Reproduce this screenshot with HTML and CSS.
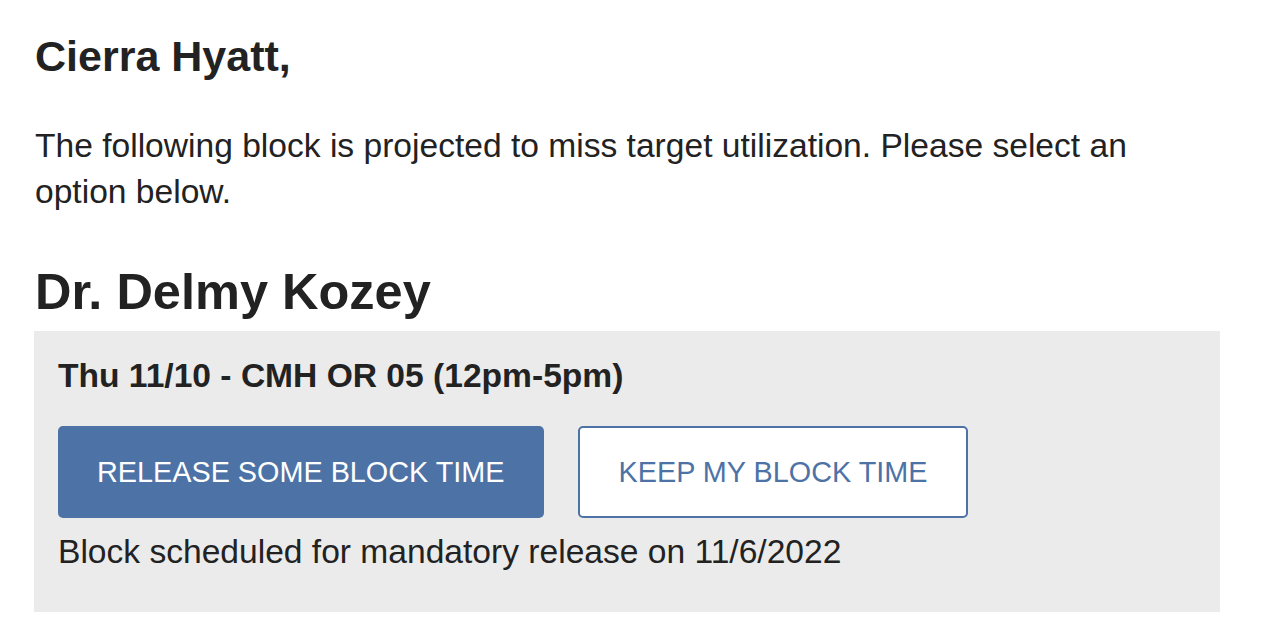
FILE: index.html
```html
<!DOCTYPE html>
<html lang="en">
<head>
  <meta charset="UTF-8">
  <meta name="viewport" content="width=device-width, initial-scale=1.0">
  <title>Block utilization</title>
  <link rel="stylesheet" href="styles.css">
</head>
<body>
  <div class="page">
    <h2 class="greeting">Cierra Hyatt,</h2>
    <p class="intro">The following block is projected to miss target utilization. Please select an option below.</p>

    <h1 class="doctor">Dr. Delmy Kozey</h1>

    <!-- block card -->
    <div class="block">
      <h3 class="block-title">Thu 11/10 - CMH OR 05 (12pm-5pm)</h3>
      <div class="actions">
        <button class="btn btn-primary">RELEASE SOME BLOCK TIME</button>
        <button class="btn btn-outline">KEEP MY BLOCK TIME</button>
      </div>
      <p class="block-note">Block scheduled for mandatory release on 11/6/2022</p>
    </div>
  </div>
</body>
</html>
```

FILE: styles.css
```css
body {
  font-family: "Liberation Sans", Arial, sans-serif;
  color: #222;
  background-color: white;
  margin: 0;
  padding: 0;
}
.page {
  width: 1186px;
  margin-left: 34px;
}
.greeting {
  font-size: 43px;
  line-height: 50px;
  font-weight: bold;
  margin: 31px 0 0 1px;
}
.intro {
  font-size: 33.6px;
  line-height: 46px;
  margin: 42px 0 0 1px;
}
.doctor {
  font-size: 50.5px;
  line-height: 56px;
  font-weight: bold;
  margin: 49px 0 11px 1px;
}
.block {
  background-color: #ebebeb;
  padding: 25px 24px 40px 24px;
}
.block-title {
  font-size: 33.6px;
  line-height: 40px;
  font-weight: bold;
  margin: 0 0 30px;
}
.actions {
  display: flex;
  gap: 34px;
}
.btn {
  font-family: "Liberation Sans", Arial, sans-serif;
  font-size: 28.8px;
  height: 92px;
  padding: 0 39px;
  border-radius: 5px;
  cursor: pointer;
}
.btn-primary {
  background-color: #4d72a6;
  color: white;
  border: none;
}
.btn-outline {
  background-color: white;
  color: #4d72a6;
  border: 2px solid #4d72a6;
}
.block-note {
  font-size: 33.6px;
  line-height: 40px;
  margin: 14px 0 0;
}
```
